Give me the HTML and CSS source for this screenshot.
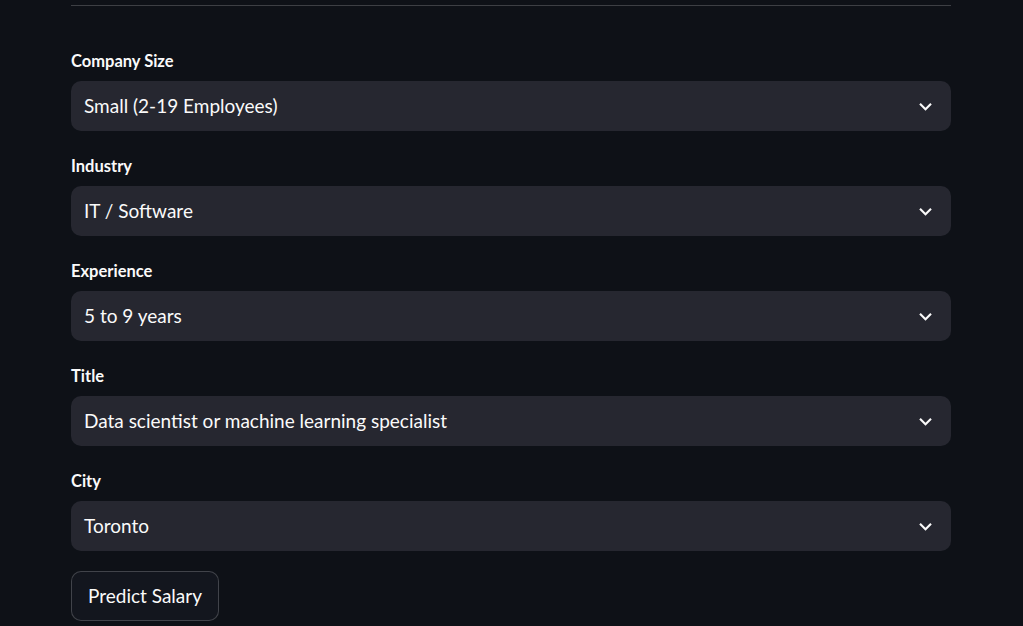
FILE: index.html
```html
<!DOCTYPE html>
<html lang="en">
<head>
<meta charset="utf-8">
<title>Salary Prediction</title>
<link rel="stylesheet" href="styles.css">
</head>
<body>
<main class="main">
  <hr class="divider">
  <form class="form">
    <div class="field">
      <label class="label">Company Size</label>
      <div class="select">
        <span class="value">Small (2-19 Employees)</span>
        <svg class="chev" viewBox="0 0 24 24" width="25" height="25"><path d="M16.59 8.59L12 13.17 7.41 8.59 6 10l6 6 6-6z" fill="#fafafa"/></svg>
      </div>
    </div>
    <div class="field">
      <label class="label">Industry</label>
      <div class="select">
        <span class="value">IT / Software</span>
        <svg class="chev" viewBox="0 0 24 24" width="25" height="25"><path d="M16.59 8.59L12 13.17 7.41 8.59 6 10l6 6 6-6z" fill="#fafafa"/></svg>
      </div>
    </div>
    <div class="field">
      <label class="label">Experience</label>
      <div class="select">
        <span class="value">5 to 9 years</span>
        <svg class="chev" viewBox="0 0 24 24" width="25" height="25"><path d="M16.59 8.59L12 13.17 7.41 8.59 6 10l6 6 6-6z" fill="#fafafa"/></svg>
      </div>
    </div>
    <div class="field">
      <label class="label">Title</label>
      <div class="select">
        <span class="value">Data scientist or machine learning specialist</span>
        <svg class="chev" viewBox="0 0 24 24" width="25" height="25"><path d="M16.59 8.59L12 13.17 7.41 8.59 6 10l6 6 6-6z" fill="#fafafa"/></svg>
      </div>
    </div>
    <div class="field">
      <label class="label">City</label>
      <div class="select">
        <span class="value">Toronto</span>
        <svg class="chev" viewBox="0 0 24 24" width="25" height="25"><path d="M16.59 8.59L12 13.17 7.41 8.59 6 10l6 6 6-6z" fill="#fafafa"/></svg>
      </div>
    </div>
    <div class="actions">
      <button type="button" class="btn">Predict Salary</button>
    </div>
  </form>
</main>
</body>
</html>
```
FILE: styles.css
```css
html, body {
  margin: 0;
  padding: 0;
  background: #0e1117;
  color: #fafafa;
  font-family: Lato, "Noto Sans", sans-serif;
}
.main {
  width: 880px;
  margin-left: 71px;
  padding-top: 5px;
}
.divider {
  margin: 0;
  border: 0;
  height: 1px;
  background: rgba(250, 250, 250, 0.2);
}
.form {
  display: flex;
  flex-direction: column;
  gap: 20px;
  padding-top: 40px;
}
.field {
  display: flex;
  flex-direction: column;
  gap: 5px;
}
.label {
  height: 30px;
  line-height: 30px;
  font-size: 16.5px;
  font-weight: 700;
  color: #fafafa;
}
.select {
  height: 50px;
  box-sizing: border-box;
  background: #262730;
  border-radius: 10px;
  display: flex;
  align-items: center;
  padding: 0 13px 0 13px;
}
.value {
  flex: 1;
  font-size: 19px;
  white-space: nowrap;
  margin-top: -2px;
}
.chev {
  display: block;
  flex: none;
}
.actions {
  display: flex;
}
.btn {
  height: 50px;
  box-sizing: border-box;
  padding: 0 16px 1px;
  background: #13161e;
  border: 1px solid rgba(250, 250, 250, 0.2);
  border-radius: 10px;
  color: #fafafa;
  font-family: Lato, "Noto Sans", sans-serif;
  font-size: 19px;
}
```
